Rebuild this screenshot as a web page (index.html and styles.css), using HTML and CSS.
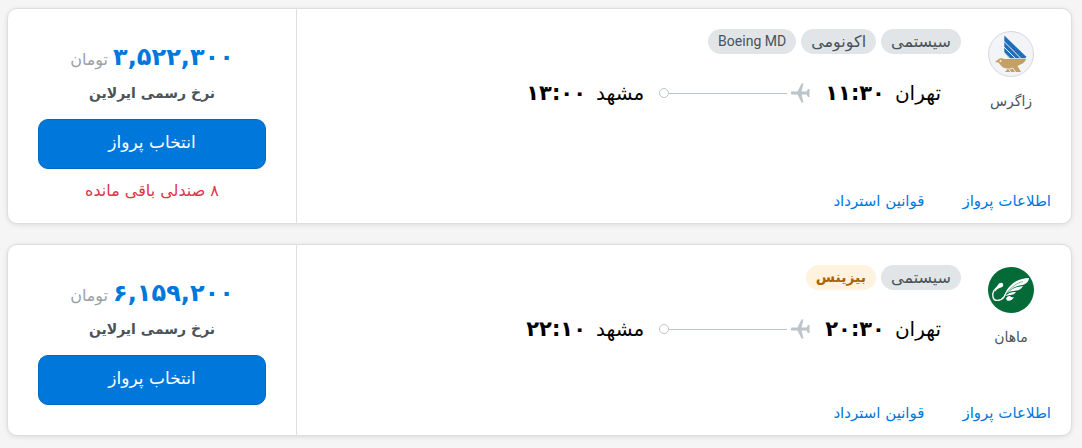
FILE: index.html
```html
<!DOCTYPE html>
<html lang="fa" dir="rtl">
<head>
    <meta charset="UTF-8">
    <meta name="viewport" content="width=device-width, initial-scale=1.0">
    <title>پرواز تهران به مشهد</title>
    <link rel="stylesheet" href="styles.css">
</head>
<body>
    <main class="flights">
        <article class="card">
            <div class="details">
                <div class="summary">
                    <div class="airline">
                        <svg class="logo" viewBox="0 0 46 46" aria-hidden="true">
                            <circle cx="23" cy="23" r="22.5" fill="#f3f4f7" stroke="#d5d7da"/>
                            <path fill="#1f6fb8" d="M16.3 4.5 L38.5 26 L37 27.3 H16.3z"/>
                            <path stroke="#f3f4f7" stroke-width="1" fill="none" d="M15.5 10 L33 27.5 M15.5 15.5 L27.5 27.5 M15.5 21 L22 27.5"/>
                            <path fill="#f3f4f7" d="M15.5 21 L22 28 H15.5z"/>
                            <path fill="#c4a067" d="M7 31 L10 28.5 Q13 26.5 16 28 H38.5 L35.5 32 L29.5 35 L33 41 H17 L20 37.5 Q15 37.5 12.5 34 L10.5 31.5z"/>
                            <path stroke="#f3f4f7" stroke-width="1" fill="none" d="M23 41.5 L20.5 37.5 M28 41.5 L24.5 37 L21.5 38"/>
                            <circle cx="12.5" cy="30" r="1" fill="#f3f4f7"/>
                        </svg>
                        <span class="airline-name">زاگرس</span>
                    </div>
                    <div class="trip">
                        <div class="tags">
                            <span class="tag">سیستمی</span>
                            <span class="tag">اکونومی</span>
                            <span class="tag tag-latin" dir="ltr">Boeing MD</span>
                        </div>
                        <div class="route">
                            <span class="city">تهران</span>
                            <time class="time">۱۱:۳۰</time>
                            <div class="path">
                                <svg class="plane" viewBox="0 0 20 20" aria-hidden="true">
                                    <path d="M1.5 8.6 H7.5 L11.5 .5 H13.5 L11.5 8.6 H16.5 L18 6 H19.5 V14 H18 L16.5 11.4 H11.5 L13.5 19.5 H11.5 L7.5 11.4 H1.5 Q0 10 1.5 8.6z"/>
                                </svg>
                                <span class="line"></span>
                                <span class="dot"></span>
                            </div>
                            <span class="city">مشهد</span>
                            <time class="time">۱۳:۰۰</time>
                        </div>
                    </div>
                </div>
                <nav class="links">
                    <a href="#">اطلاعات پرواز</a>
                    <a href="#">قوانین استرداد</a>
                </nav>
            </div>
            <div class="booking">
                <p class="price"><strong>۳,۵۲۲,۳۰۰</strong> <span>تومان</span></p>
                <p class="rate">نرخ رسمی ایرلاین</p>
                <button class="select-btn" type="button">انتخاب پرواز</button>
                <p class="seats">۸ صندلی باقی مانده</p>
            </div>
        </article>

        <article class="card">
            <div class="details">
                <div class="summary">
                    <div class="airline">
                        <svg class="logo" viewBox="0 0 46 46" aria-hidden="true">
                            <circle cx="23" cy="23" r="23" fill="#046a38"/>
                            <path fill="none" stroke="#fff" stroke-width="1.3" stroke-linecap="round" d="M11 19 C6 22 4 26 5 30 C6 35 13 34 16 30 L18 26"/>
                            <path fill="#fff" d="M9.5 18.5 Q11 15 14.5 16 Q17 20 11.5 21 Q9 22 6.5 25 Q7 21 9.5 18.5z"/>
                            <path fill="#fff" d="M16 30 C18 21 27 11 41 11 C41 15 37 18 32 18.5 C25 20 20 24 16 30z"/>
                            <path fill="#fff" d="M17 29 C21 22 27 19.5 35 19 C33 23 29 24 26 24 C21 24.5 19 26 17 29z"/>
                            <path fill="#fff" d="M17.5 29 C20 25.5 24 25 28 25 C26 28.5 22 27.5 17.5 29z"/>
                            <path fill="#fff" d="M18 31.5 Q19 28.5 22 29 Q23 31 26 30 Q23 35 19 33.5z"/>
                            <path fill="none" stroke="#046a38" stroke-width=".5" d="M18 27 C23 20 29 16 35 14.5 M18 28 C23 21 28 19.5 34 18.7 M19 27 C22 24.5 26 24.5 29 24"/>
                        </svg>
                        <span class="airline-name">ماهان</span>
                    </div>
                    <div class="trip">
                        <div class="tags">
                            <span class="tag">سیستمی</span>
                            <span class="tag tag-business">بیزینس</span>
                        </div>
                        <div class="route">
                            <span class="city">تهران</span>
                            <time class="time">۲۰:۳۰</time>
                            <div class="path">
                                <svg class="plane" viewBox="0 0 20 20" aria-hidden="true">
                                    <path d="M1.5 8.6 H7.5 L11.5 .5 H13.5 L11.5 8.6 H16.5 L18 6 H19.5 V14 H18 L16.5 11.4 H11.5 L13.5 19.5 H11.5 L7.5 11.4 H1.5 Q0 10 1.5 8.6z"/>
                                </svg>
                                <span class="line"></span>
                                <span class="dot"></span>
                            </div>
                            <span class="city">مشهد</span>
                            <time class="time">۲۲:۱۰</time>
                        </div>
                    </div>
                </div>
                <nav class="links">
                    <a href="#">اطلاعات پرواز</a>
                    <a href="#">قوانین استرداد</a>
                </nav>
            </div>
            <div class="booking">
                <p class="price"><strong>۶,۱۵۹,۲۰۰</strong> <span>تومان</span></p>
                <p class="rate">نرخ رسمی ایرلاین</p>
                <button class="select-btn" type="button">انتخاب پرواز</button>
            </div>
        </article>
    </main>
</body>
</html>
```
FILE: styles.css
```css
* {
    margin: 0;
    padding: 0;
    box-sizing: border-box;
}
body {
    background-color: #f5f5f5;
    font-family: "DejaVu Sans", sans-serif;
    color: #4b5259;
}
.flights {
    display: flex;
    flex-direction: column;
    gap: 20px;
    padding: 8px 10px 8px 7px;
}
.card {
    display: flex;
    background-color: #fff;
    border: 1px solid #dedede;
    border-radius: 10px;
    box-shadow: 0 1px 5px rgba(0,0,0,0.1);
}
.details {
    flex: 1;
    display: flex;
    flex-direction: column;
    justify-content: space-between;
    padding: 20px 20px 10px;
}
.summary {
    display: flex;
    gap: 10px;
}
.airline {
    width: 80px;
    padding-top: 2px;
    display: flex;
    flex-direction: column;
    align-items: center;
    gap: 12px;
}
.logo {
    width: 46px;
    height: 46px;
}
.airline-name {
    font-size: 14px;
    line-height: 24px;
}
.tags {
    display: flex;
    gap: 5px;
}
.tag {
    padding: 0 10px;
    border-radius: 13px;
    background-color: #e1e5e8;
    font-size: 16px;
    line-height: 25px;
}
.tag-latin {
    font-family: Roboto, sans-serif;
    font-size: 14px;
}
.tag-business {
    background-color: #fff3e0;
    color: #ad6200;
    font-size: 14px;
    font-weight: bold;
}
.route {
    display: flex;
    align-items: center;
    gap: 10px;
    margin-top: 23px;
    padding-right: 20px;
    color: #000;
    line-height: 32px;
}
.city {
    font-size: 20px;
}
.time {
    font-size: 21px;
    font-weight: bold;
}
.path {
    display: flex;
    align-items: center;
    margin: 0 5px;
}
.plane {
    width: 20px;
    height: 20px;
    margin-left: 3px;
    fill: #bdc4ca;
}
.line {
    width: 118px;
    height: 1px;
    background-color: #bdc4ca;
}
.dot {
    width: 10px;
    height: 10px;
    border: 1px solid #bdc4ca;
    border-radius: 50%;
}
.links {
    display: flex;
    gap: 38px;
    font-size: 15px;
    line-height: 24px;
}
.links a {
    color: #0077db;
    text-decoration: none;
}
.booking {
    width: 289px;
    padding: 28px 30px 30px;
    border-right: 1px solid #dedede;
    text-align: center;
}
.price {
    display: flex;
    justify-content: center;
    align-items: baseline;
    gap: 5px;
    height: 40px;
    color: #0077db;
    line-height: 40px;
}
.price strong {
    font-size: 24px;
}
.price span {
    color: #999fa5;
    font-size: 16px;
}
.rate {
    margin-bottom: 10px;
    font-size: 14px;
    font-weight: bold;
    line-height: 32px;
}
.select-btn {
    display: block;
    width: 100%;
    height: 50px;
    padding-bottom: 4px;
    border: 1px solid #0069c2;
    border-radius: 10px;
    background-color: #0077db;
    color: #fff;
    font-family: inherit;
    font-size: 17px;
    cursor: pointer;
}
.seats {
    margin-top: 10px;
    margin-bottom: -10px;
    color: #dc3545;
    font-size: 16px;
    line-height: 24px;
}
```
